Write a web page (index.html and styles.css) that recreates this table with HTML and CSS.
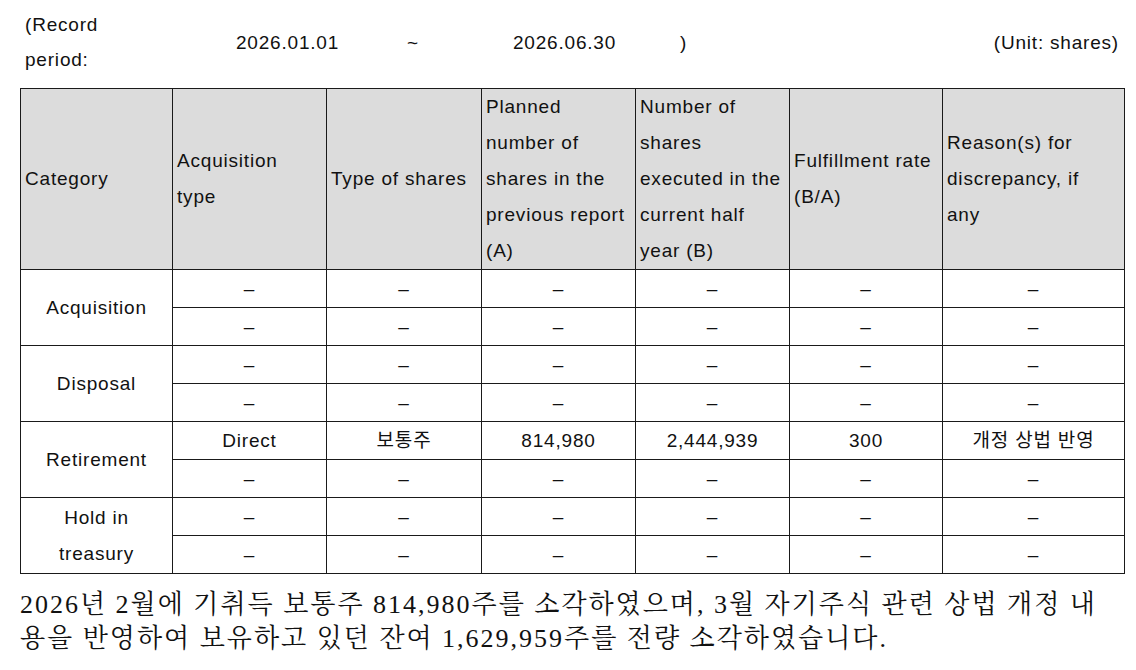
FILE: index.html
```html
<!DOCTYPE html>
<html lang="ko">
<head>
<meta charset="utf-8">
<title>Treasury shares</title>
<link rel="stylesheet" href="styles.css">
</head>
<body>
<div class="page">
  <div class="period">
    <div class="period-label">(Record period:</div>
    <div class="period-from">2026.01.01</div>
    <div class="period-tilde">~</div>
    <div class="period-to">2026.06.30</div>
    <div class="period-close">)</div>
    <div class="period-unit">(Unit: shares)</div>
  </div>
  <table class="grid">
    <colgroup>
      <col class="c1"><col class="c2"><col class="c3"><col class="c4"><col class="c5"><col class="c6"><col class="c7">
    </colgroup>
    <thead>
      <tr>
        <th>Category</th>
        <th>Acquisition type</th>
        <th>Type of shares</th>
        <th>Planned number of shares in the previous report (A)</th>
        <th>Number of shares executed in the current half year (B)</th>
        <th>Fulfillment rate (B/A)</th>
        <th class="last">Reason(s) for discrepancy, if any</th>
      </tr>
    </thead>
    <tbody>
      <tr><td rowspan="2" class="cat">Acquisition</td><td>–</td><td>–</td><td>–</td><td>–</td><td>–</td><td>–</td></tr>
      <tr><td>–</td><td>–</td><td>–</td><td>–</td><td>–</td><td>–</td></tr>
      <tr><td rowspan="2" class="cat">Disposal</td><td>–</td><td>–</td><td>–</td><td>–</td><td>–</td><td>–</td></tr>
      <tr><td>–</td><td>–</td><td>–</td><td>–</td><td>–</td><td>–</td></tr>
      <tr><td rowspan="2" class="cat">Retirement</td><td>Direct</td><td>보통주</td><td>814,980</td><td>2,444,939</td><td>300</td><td>개정 상법 반영</td></tr>
      <tr><td>–</td><td>–</td><td>–</td><td>–</td><td>–</td><td>–</td></tr>
      <tr><td rowspan="2" class="cat">Hold in<br>treasury</td><td>–</td><td>–</td><td>–</td><td>–</td><td>–</td><td>–</td></tr>
      <tr><td>–</td><td>–</td><td>–</td><td>–</td><td>–</td><td>–</td></tr>
    </tbody>
  </table>
  <p class="note"><span class="line">2026년 2월에 기취득 보통주 814,980주를 소각하였으며, 3월 자기주식 관련 상법 개정 내</span><span class="line">용을 반영하여 보유하고 있던 잔여 1,629,959주를 전량 소각하였습니다.</span></p>
</div>
</body>
</html>
```

FILE: styles.css
```css
html, body {
  margin: 0;
  padding: 0;
  background: #ffffff;
}

.page {
  padding: 7px 12px 0 20px;
  font-family: "Liberation Sans", "Noto Sans CJK KR", sans-serif;
  font-size: 19px;
  letter-spacing: 0.8px;
  color: #111;
}

.period {
  display: grid;
  grid-template-columns: 216px 171px 106px 167px 1fr auto;
  align-items: center;
  line-height: 35px;
  margin-bottom: 11px;
  padding-right: 5px;
}

.period-label {
  padding-left: 5px;
  width: 80px;
}

.period-unit {
  text-align: right;
}

.grid {
  border-collapse: collapse;
  table-layout: fixed;
  width: 1104px;
}

.c1 { width: 152px; }
.c2 { width: 154px; }
.c3 { width: 155px; }
.c4 { width: 154px; }
.c5 { width: 154px; }
.c6 { width: 153px; }
.c7 { width: 182px; }

.grid th,
.grid td {
  border: 1px solid #1a1a1a;
  padding: 0 4px;
  font-weight: normal;
}

.grid th {
  background: #dcdcdc;
  height: 178px;
  text-align: left;
  vertical-align: middle;
  line-height: 36px;
}

.grid th.last {
  padding-right: 16px;
}

.grid td {
  height: 37px;
  text-align: center;
  vertical-align: middle;
  line-height: 36px;
}

.note {
  margin: 14px 0 0 0;
  font-family: "Liberation Serif", "Noto Serif CJK KR", "Noto Sans CJK KR", serif;
  font-size: 26px;
  letter-spacing: 2px;
  line-height: 34px;
}

.note .line {
  display: block;
  white-space: nowrap;
}
```
